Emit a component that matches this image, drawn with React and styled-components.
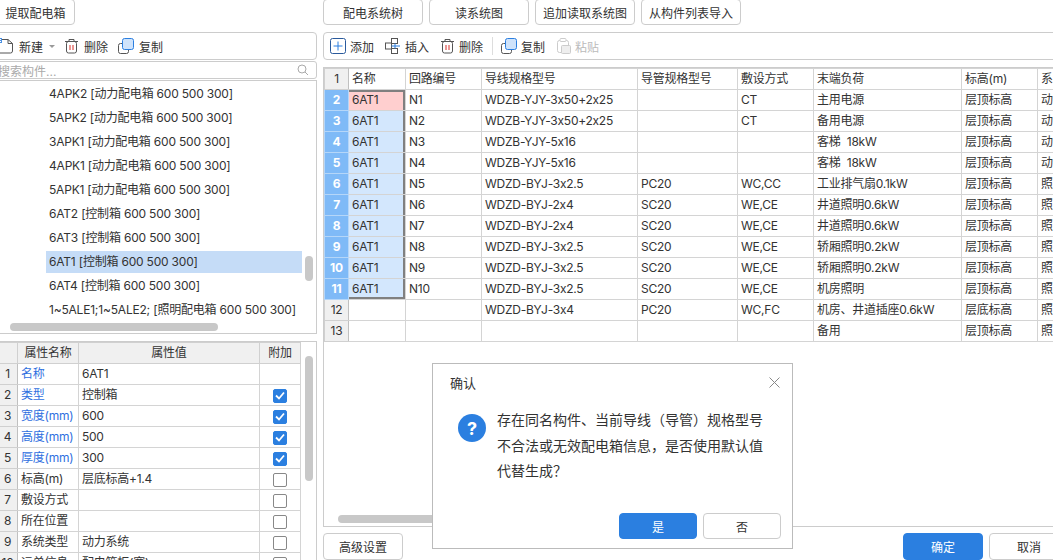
import React from 'react';
import styled, { createGlobalStyle } from 'styled-components';

const GlobalStyle = createGlobalStyle`
  html, body {
    margin: 0;
    padding: 0;
    width: 100%;
    height: 100%;
    overflow: hidden;
    background: #fff;
  }
  body {
    font-family: "Inter", "Noto Sans CJK SC", sans-serif;
    font-size: 12px;
    font-feature-settings: "calt" 0, "liga" 0;
    color: #333;
  }
`;

const Page = styled.div`
  width: 1053px;
  height: 560px;
  display: flex;
  overflow: hidden;
  position: relative;
`;

const LeftPane = styled.div`
  width: 321px;
  margin-left: -4px;
  margin-right: 6px;
  flex-shrink: 0;
  display: flex;
  flex-direction: column;
`;

const RightPane = styled.div`
  width: 760px;
  flex-shrink: 0;
  display: flex;
  flex-direction: column;
`;

const TopButtons = styled.div`
  height: 25px;
  display: flex;
  gap: 6px;
  margin-top: -1px;
  margin-bottom: 8px;
`;

const Button = styled.button`
  width: ${p => p.$w}px;
  height: ${p => p.$h ?? 26}px;
  padding: 0;
  background: ${p => (p.$primary ? '#2b7fe0' : '#fff')};
  color: ${p => (p.$primary ? '#fff' : '#333')};
  border: 1px solid ${p => (p.$primary ? '#2b7fe0' : '#ccc')};
  border-radius: 4px;
  font: inherit;
  flex-shrink: 0;
`;

const Toolbar = styled.div`
  height: 26px;
  border: 1px solid #ccc;
  border-radius: 4px;
  display: flex;
  align-items: center;
  padding-left: ${p => p.$pad}px;
  flex-shrink: 0;
`;

const Tool = styled.span`
  display: inline-flex;
  align-items: center;
  gap: ${p => p.$inner ?? 4}px;
  margin-right: ${p => p.$gap ?? 11}px;
  color: ${p => (p.$off ? '#bbb' : '#333')};
  white-space: nowrap;
`;

const Caret = styled.span`
  width: 0;
  height: 0;
  border: 3px solid transparent;
  border-top: 3px solid #999;
  margin: 3px 9px 0 6px;
`;

const Sep = styled.span`
  width: 1px;
  height: 18px;
  background: #ddd;
  margin: 0 8px 0 -2px;
`;

const Search = styled.div`
  height: 16px;
  margin-top: 1px;
  border: 1px solid #ccc;
  border-radius: 3px;
  display: flex;
  align-items: center;
  justify-content: space-between;
  padding: 0 7px 0 1px;
  color: #aaa;
  flex-shrink: 0;
`;

const ListBox = styled.div`
  height: 254px;
  border: 1px solid #ccc;
  box-sizing: border-box;
  margin-top: 1px;
  padding-top: 2px;
  position: relative;
  overflow: hidden;
  flex-shrink: 0;
`;

const ListItem = styled.div`
  height: 22px;
  line-height: 22px;
  margin: 0 14px 2px 49px;
  padding-left: 3px;
  white-space: nowrap;
  letter-spacing: -0.2px;
  background: ${p => (p.$selected ? '#c5dcf7' : 'transparent')};
`;

const VThumb = styled.div`
  position: absolute;
  left: ${p => p.$x}px;
  top: ${p => p.$y}px;
  width: 8px;
  height: ${p => p.$h}px;
  border-radius: 4px;
  background: #c8c8c8;
`;

const HThumb = styled.div`
  position: absolute;
  left: ${p => p.$x}px;
  top: ${p => p.$y}px;
  width: ${p => p.$w}px;
  height: 8px;
  border-radius: 4px;
  background: #c8c8c8;
`;

const PropBox = styled.div`
  margin-top: 7px;
  flex: 1;
  border: 1px solid #ccc;
  border-bottom: none;
  position: relative;
  overflow: hidden;
`;

const Table = styled.table`
  border-collapse: collapse;
  table-layout: fixed;
  width: ${p => p.$w}px;
  letter-spacing: -0.25px;
  & td, & th {
    height: 20px;
    line-height: 16px;
    padding: 0 3px;
    border: 1px solid #d4d4d4;
    font-weight: normal;
    white-space: pre;
    overflow: hidden;
    text-align: left;
    box-sizing: content-box;
  }
`;

const HeadCell = styled.th`
  && {
    background: #f0f0f0;
    text-align: center;
    border-color: #d0d0d0;
  }
`;

const IndexCell = styled.td`
  && {
    background: ${p => (p.$active ? '#7fbaf7' : '#f0f0f0')};
    color: ${p => (p.$active ? '#fff' : '#333')};
    font-weight: ${p => (p.$active ? 'bold' : 'normal')};
    text-align: center;
    border-color: ${p => (p.$active ? '#b5d6f8' : '#d0d0d0')};
    border-right-color: ${p => (p.$active ? '#b5d6f8' : '#c0c0c0')};
    padding: 0;
  }
`;

const NameCell = styled.td`
  && {
    color: ${p => (p.$blue ? '#2f6fe0' : '#333')};
  }
`;

const CheckCell = styled.td`
  && {
    text-align: center;
    padding: 0;
  }
`;

const Check = styled.span`
  display: inline-flex;
  align-items: center;
  justify-content: center;
  box-sizing: border-box;
  width: 14px;
  height: 14px;
  vertical-align: middle;
  border-radius: 2px;
  background: ${p => (p.$on ? '#2b7fe0' : '#fff')};
  border: 1px solid ${p => (p.$on ? '#2b7fe0' : '#888')};
`;

const GridBox = styled.div`
  margin-top: 7px;
  flex: 1;
  border-left: 1px solid #ccc;
  border-top: 1px solid #ccc;
  border-bottom: 1px solid #ccc;
  position: relative;
  overflow: hidden;
`;

const MainHead = styled.td`
  && {
    background: #fff;
  }
`;

const selectionShadow = p => {
  if (!p.$tone) return 'none';
  const parts = ['inset -2px 0 #808080'];
  if (p.$first) parts.push('inset 0 2px #808080');
  if (p.$last) parts.push('inset 0 -2px #808080');
  return parts.join(', ');
};

const GridCell = styled.td`
  && {
    padding-left: 3px;
    background: ${p => (p.$tone === 'red' ? '#ffcfcf' : p.$tone === 'blue' ? '#d3e7fd' : '#fff')};
    box-shadow: ${selectionShadow};
  }
`;

const Footer = styled.div`
  height: 33px;
  display: flex;
  align-items: flex-start;
  padding-top: 6px;
  box-sizing: border-box;
  flex-shrink: 0;
`;

const FooterRight = styled.div`
  margin-left: auto;
  display: flex;
  gap: 6px;
  margin-right: 14px;
`;

const Dialog = styled.div`
  position: absolute;
  left: 432px;
  top: 363px;
  width: 359px;
  height: 184px;
  background: #fff;
  border: 1px solid #bbb;
  display: flex;
  flex-direction: column;
`;

const DialogHead = styled.div`
  height: 37px;
  padding: 0 12px 0 17px;
  display: flex;
  align-items: center;
  justify-content: space-between;
  font-size: 13px;
`;

const DialogBody = styled.div`
  flex: 1;
  display: flex;
  gap: 11px;
  padding: 6px 20px 0 25px;
`;

const Msg = styled.div`
  font-size: 14px;
  line-height: 25.5px;
  width: 280px;
`;

const QuestionMark = styled.div`
  width: 28px;
  height: 28px;
  margin-top: 7px;
  border-radius: 50%;
  background: #2b7fe0;
  color: #fff;
  font-size: 18px;
  font-weight: bold;
  display: flex;
  align-items: center;
  justify-content: center;
  flex-shrink: 0;
`;

const DialogFoot = styled.div`
  display: flex;
  justify-content: flex-end;
  gap: 6px;
  padding: 0 11px 9px 0;
`;

// icons
const NewIcon = () => (
  <svg width="17" height="16" viewBox="0 0 17 16" fill="none">
    <path d="M4 1.5h7l4.5 4v7.5a2 2 0 0 1-2 2H2.5a2 2 0 0 1-2-2V6" stroke="#555" />
    <path d="M11 1.5v4h4.5" stroke="#555" />
    <rect x="0" y="0" width="5" height="5" fill="#4a90e2" />
    <path d="M1 1h1v1H1zM3 1h1v1H3zM2 2h1v1H2zM1 3h1v1H1zM3 3h1v1H3z" fill="#fff" />
  </svg>
);

const TrashIcon = () => (
  <svg width="15" height="16" viewBox="0 0 15 16" fill="none">
    <path d="M1 3.5h13" stroke="#555" />
    <path d="M5 3.5V1.5h5v2" stroke="#555" />
    <rect x="2.5" y="3.5" width="10" height="11.5" rx="2" stroke="#555" />
    <path d="M6 7v5M9 7v5" stroke="#d9302a" />
  </svg>
);

const CopyIcon = () => (
  <svg width="16" height="16" viewBox="0 0 16 16" fill="none">
    <path d="M4.5 5.5h-2a2 2 0 0 0-2 2v6a2 2 0 0 0 2 2h6a2 2 0 0 0 2-2v-2" stroke="#555" />
    <rect x="4.5" y="0.5" width="11" height="11" rx="2" fill="#cfe3fb" stroke="#2b7fe0" />
  </svg>
);

const AddIcon = () => (
  <svg width="16" height="16" viewBox="0 0 16 16" fill="none">
    <rect x="0.5" y="0.5" width="15" height="15" rx="2" stroke="#2a5a9c" />
    <path d="M8 3.5v9M3.5 8h9" stroke="#2b7fe0" />
  </svg>
);

const InsertIcon = () => (
  <svg width="16" height="16" viewBox="0 0 16 16" fill="none">
    <rect x="0.5" y="5" width="6" height="6" stroke="#555" />
    <rect x="6.5" y="0.5" width="6" height="5" stroke="#555" />
    <rect x="6.5" y="10.5" width="6" height="5" stroke="#555" />
    <path d="M6.5 8h8.5M10 5.5v5" stroke="#2b7fe0" />
  </svg>
);

const PasteIcon = () => (
  <svg width="15" height="16" viewBox="0 0 15 16" fill="none">
    <rect x="1.5" y="2.5" width="11" height="12" rx="2" stroke="#ccc" />
    <rect x="4" y="0.5" width="6" height="3" rx="1" fill="#fff" stroke="#ccc" />
    <rect x="5.5" y="7.5" width="9" height="8" rx="1" fill="#eee" stroke="#ccc" />
  </svg>
);

const SearchIcon = () => (
  <svg width="12" height="12" viewBox="0 0 12 12" fill="none">
    <circle cx="5" cy="5" r="4" stroke="#aaa" />
    <path d="M8 8l3 3" stroke="#aaa" />
  </svg>
);

const CloseIcon = () => (
  <svg width="11" height="11" viewBox="0 0 11 11" fill="none">
    <path d="M0.5 0.5l10 10M10.5 0.5l-10 10" stroke="#888" />
  </svg>
);

const Tick = () => (
  <svg width="10" height="9" viewBox="0 0 10 9" fill="none">
    <path d="M1 4.5l3 3L9 1.5" stroke="#fff" strokeWidth="1.8" />
  </svg>
);

const listItems = [
  '4APK2 [动力配电箱 600 500 300]',
  '5APK2 [动力配电箱 600 500 300]',
  '3APK1 [动力配电箱 600 500 300]',
  '4APK1 [动力配电箱 600 500 300]',
  '5APK1 [动力配电箱 600 500 300]',
  '6AT2 [控制箱 600 500 300]',
  '6AT3 [控制箱 600 500 300]',
  '6AT1 [控制箱 600 500 300]',
  '6AT4 [控制箱 600 500 300]',
  '1~5ALE1;1~5ALE2; [照明配电箱 600 500 300]',
];

const props = [
  ['名称', '6AT1', true, null],
  ['类型', '控制箱', true, true],
  ['宽度(mm)', '600', true, true],
  ['高度(mm)', '500', true, true],
  ['厚度(mm)', '300', true, true],
  ['标高(m)', '层底标高+1.4', false, false],
  ['敷设方式', '', false, false],
  ['所在位置', '', false, false],
  ['系统类型', '动力系统', false, false],
  ['运单信息', '配电箱柜(宽)', false, false],
];

const gridCols = [57, 76, 156, 100, 76, 148, 76, 60];
const gridHead = ['名称', '回路编号', '导线规格型号', '导管规格型号', '敷设方式', '末端负荷', '标高(m)', '系'];

const rows = [
  ['6AT1', 'N1', 'WDZB-YJY-3x50+2x25', '', 'CT', '主用电源', '层顶标高', '动'],
  ['6AT1', 'N2', 'WDZB-YJY-3x50+2x25', '', 'CT', '备用电源', '层顶标高', '动'],
  ['6AT1', 'N3', 'WDZB-YJY-5x16', '', '', '客梯  18kW', '层顶标高', '动'],
  ['6AT1', 'N4', 'WDZB-YJY-5x16', '', '', '客梯  18kW', '层顶标高', '动'],
  ['6AT1', 'N5', 'WDZD-BYJ-3x2.5', 'PC20', 'WC,CC', '工业排气扇0.1kW', '层顶标高', '照'],
  ['6AT1', 'N6', 'WDZD-BYJ-2x4', 'SC20', 'WE,CE', '井道照明0.6kW', '层顶标高', '照'],
  ['6AT1', 'N7', 'WDZD-BYJ-2x4', 'SC20', 'WE,CE', '井道照明0.6kW', '层顶标高', '照'],
  ['6AT1', 'N8', 'WDZD-BYJ-3x2.5', 'SC20', 'WE,CE', '轿厢照明0.2kW', '层顶标高', '照'],
  ['6AT1', 'N9', 'WDZD-BYJ-3x2.5', 'SC20', 'WE,CE', '轿厢照明0.2kW', '层顶标高', '照'],
  ['6AT1', 'N10', 'WDZD-BYJ-3x2.5', 'SC20', 'WE,CE', '机房照明', '层顶标高', '照'],
  ['', '', 'WDZD-BYJ-3x4', 'PC20', 'WC,FC', '机房、井道插座0.6kW', '层底标高', '照'],
  ['', '', '', '', '', '备用', '层顶标高', '照'],
];

const PropTable = () => (
  <Table $w={303}>
    <colgroup>
      <col width="20" />
      <col width="61" />
      <col width="181" />
      <col width="41" />
    </colgroup>
    <thead>
      <tr>
        <HeadCell />
        <HeadCell>属性名称</HeadCell>
        <HeadCell>属性值</HeadCell>
        <HeadCell>附加</HeadCell>
      </tr>
    </thead>
    <tbody>
      {props.map((p, i) => (
        <tr key={i}>
          <IndexCell>{i + 1}</IndexCell>
          <NameCell $blue={p[2]}>{p[0]}</NameCell>
          <td>{p[1]}</td>
          <CheckCell>
            {p[3] !== null && (
              <Check $on={p[3]}>{p[3] && <Tick />}</Check>
            )}
          </CheckCell>
        </tr>
      ))}
    </tbody>
  </Table>
);

const MainTable = () => (
  <Table $w={748}>
    <colgroup>
      <col width="24" />
      {gridCols.map((w, i) => (
        <col key={i} width={w} />
      ))}
    </colgroup>
    <tbody>
      <tr>
        <IndexCell>1</IndexCell>
        {gridHead.map(h => (
          <MainHead key={h}>{h}</MainHead>
        ))}
      </tr>
      {rows.map((r, i) => (
        <tr key={i}>
          <IndexCell $active={i < 10}>{i + 2}</IndexCell>
          {r.map((c, j) => (
            <GridCell
              key={j}
              $tone={j === 0 && i < 10 ? (i === 0 ? 'red' : 'blue') : undefined}
              $first={j === 0 && i === 0}
              $last={j === 0 && i === 9}
            >
              {c}
            </GridCell>
          ))}
        </tr>
      ))}
    </tbody>
  </Table>
);

export default function App() {
  return (
    <Page>
      <GlobalStyle />
      <LeftPane>
        <TopButtons>
          <Button $w={79}>提取配电箱</Button>
        </TopButtons>
        <Toolbar>
          <Tool $gap={0} $inner={5}><NewIcon />新建</Tool>
          <Caret />
          <Tool $inner={5} $gap={10}><TrashIcon />删除</Tool>
          <Tool $inner={5}><CopyIcon />复制</Tool>
        </Toolbar>
        <Search>
          <span>搜索构件...</span>
          <SearchIcon />
        </Search>
        <ListBox>
          {listItems.map((t, i) => (
            <ListItem key={i} $selected={i === 7}>{t}</ListItem>
          ))}
          <VThumb $x={308} $y={175} $h={25} />
          <HThumb $x={13} $y={242} $w={208} />
        </ListBox>
        <PropBox>
          <PropTable />
          <VThumb $x={308} $y={14} $h={125} />
        </PropBox>
      </LeftPane>
      <RightPane>
        <TopButtons>
          <Button $w={100}>配电系统树</Button>
          <Button $w={100}>读系统图</Button>
          <Button $w={100}>追加读取系统图</Button>
          <Button $w={100}>从构件列表导入</Button>
        </TopButtons>
        <Toolbar $pad={6}>
          <Tool><AddIcon />添加</Tool>
          <Tool><InsertIcon />插入</Tool>
          <Tool><TrashIcon />删除</Tool>
          <Sep />
          <Tool><CopyIcon />复制</Tool>
          <Tool $off><PasteIcon />粘贴</Tool>
        </Toolbar>
        <GridBox>
          <MainTable />
          <HThumb $x={14} $y={447} $w={400} />
        </GridBox>
        <Footer>
          <Button $w={80} $h={27}>高级设置</Button>
          <FooterRight>
            <Button $w={80} $h={27} $primary>确定</Button>
            <Button $w={80} $h={27}>取消</Button>
          </FooterRight>
        </Footer>
      </RightPane>
      <Dialog>
        <DialogHead>
          <span>确认</span>
          <CloseIcon />
        </DialogHead>
        <DialogBody>
          <QuestionMark>?</QuestionMark>
          <Msg>存在同名构件、当前导线（导管）规格型号不合法或无效配电箱信息，是否使用默认值代替生成？</Msg>
        </DialogBody>
        <DialogFoot>
          <Button $w={78} $primary>是</Button>
          <Button $w={78}>否</Button>
        </DialogFoot>
      </Dialog>
    </Page>
  );
}
